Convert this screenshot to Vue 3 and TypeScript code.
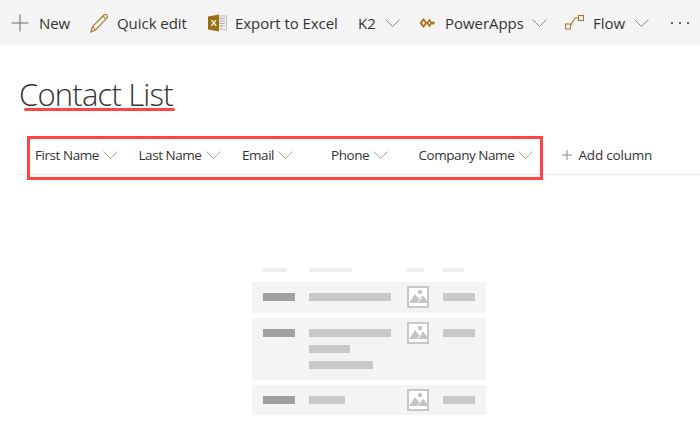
<script setup lang="ts">
interface Col { label: string; width: number }
const columns: Col[] = [
  { label: 'First Name', width: 103.5 },
  { label: 'Last Name', width: 103.5 },
  { label: 'Email', width: 89 },
  { label: 'Phone', width: 87.5 },
  { label: 'Company Name', width: 143 },
]
const rows = [
  { h: 'r1', bars: [82] },
  { h: 'r2', bars: [82, 41, 64] },
  { h: 'r3', bars: [36] },
]
</script>

<template>
  <div class="page">
    <div class="toolbar">
      <div class="cmd new">
        <svg width="18" height="18" viewBox="0 0 18 18"><path d="M9 .5v17M.5 9h17" stroke="#6b6b6b" stroke-width="1" fill="none"/></svg>
        <span>New</span>
      </div>
      <div class="cmd edit">
        <svg width="19" height="20" viewBox="0 0 19 20" fill="none" stroke="#a6772a" stroke-width="1.1"><path d="M1 19l1.500-5.500L14 2c1-1 2.300-1 3 0s.8 2 0 3L5.500 17z"/><path d="M2.500 13.500l3 3.500M13 3l3 3.300"/></svg>
        <span>Quick edit</span>
      </div>
      <div class="cmd excel">
        <svg width="19" height="18" viewBox="0 0 19 18"><rect x="9" y="2" width="9.500" height="13.500" fill="#f4f4f4" stroke="#b5b5b5" stroke-width=".8"/><path d="M10.500 4.500h6.500M10.500 7h6.500M10.500 9.500h6.500M10.500 12h6.500" stroke="#a9a9a9" stroke-width="1.200"/><path d="M13.500 2.500v12.500" stroke="#c9c9c9" stroke-width="1"/><path d="M0 2.500 11 .5v17L0 15.500z" fill="#9a6f12"/><text x="2.800" y="12.300" class="xl">X</text></svg>
        <span>Export to Excel</span>
      </div>
      <div class="cmd k2">
        <span>K2</span>
        <svg class="chev" width="15" height="8" viewBox="0 0 15 8"><path d="M.5.500 7.500 7.500 14.500.5" stroke="#8a8a8a" fill="none"/></svg>
      </div>
      <div class="cmd apps">
        <svg width="16" height="12" viewBox="0 0 16 12" fill="#a6771c"><path d="M4.500 1 8.500 6 4.500 11 .5 6zM4.500 4 3 6l1.500 2L6 6z" fill-rule="evenodd"/><path d="M10.500 1.500 13.500 6l-3 4.500L7.500 6zM10.500 4.500 9.500 6l1 1.500 1-1.500z" fill-rule="evenodd"/><path d="M14 4l2 2-2 2-1.500-2z"/></svg>
        <span>PowerApps</span>
        <svg class="chev" width="15" height="8" viewBox="0 0 15 8"><path d="M.5.500 7.500 7.500 14.500.5" stroke="#8a8a8a" fill="none"/></svg>
      </div>
      <div class="cmd flow">
        <svg width="19" height="15" viewBox="0 0 19 15" fill="none" stroke="#a6772a" stroke-width="1.100"><rect x=".5" y="9" width="5" height="5"/><rect x="13.500" y=".5" width="5" height="5"/><path d="M5.500 10.500 10 3h3.500"/></svg>
        <span>Flow</span>
        <svg class="chev" width="15" height="8" viewBox="0 0 15 8"><path d="M.5.500 7.500 7.500 14.500.5" stroke="#8a8a8a" fill="none"/></svg>
      </div>
      <div class="more"><i></i><i></i><i></i></div>
    </div>

    <div class="title-wrap">
      <h1 class="title">Contact List</h1>
      <div class="underline"></div>
    </div>

    <div class="head">
      <div class="cols">
        <div v-for="c in columns" :key="c.label" class="col" :style="{ width: c.width + 'px' }">
          <span>{{ c.label }}</span>
          <svg width="15" height="8" viewBox="0 0 15 8"><path d="M.5.500 7.500 7.500 14.500.5" stroke="#a6a6a6" fill="none"/></svg>
        </div>
      </div>
      <div class="add">
        <svg width="10" height="10" viewBox="0 0 10 10"><path d="M5 0v10M0 5h10" stroke="#8a8a8a" fill="none"/></svg>
        <span>Add column</span>
      </div>
      <div class="redbox"></div>
    </div>

    <div class="empty">
      <div class="ph-head">
        <b style="width: 24px"></b>
        <b style="width: 43px"></b>
        <b style="width: 17px"></b>
        <b style="width: 21px"></b>
      </div>
      <div v-for="r in rows" :key="r.h" class="ph-row" :class="r.h">
        <div class="c1"><b class="dark"></b></div>
        <div class="c2">
          <b v-for="(w, i) in r.bars" :key="i" :style="{ width: w + 'px' }"></b>
        </div>
        <div class="c3">
          <svg width="22" height="22" viewBox="0 0 22 22">
            <rect x="1" y="1" width="20" height="20" fill="#fff" stroke="#c8c8c8" stroke-width="2"/>
            <path d="M2 17 8 8l4.500 5.500L16 9.500l4 5V17z" fill="#c4c4c4"/>
            <circle cx="13" cy="6" r="2.200" fill="#c4c4c4"/>
            <path d="M10 17l4.500-5" stroke="#fff" stroke-width="1" fill="none"/>
          </svg>
        </div>
        <div class="c4"><b></b></div>
      </div>
    </div>
  </div>
</template>

<style>
html, body { margin: 0; background: #fff; }
</style>

<style scoped>
.page {
  width: 700px;
  height: 443px;
  overflow: hidden;
  font-family: "Open Sans", "Noto Sans", sans-serif;
  color: #333;
  font-size: 13.5px;
}
.toolbar {
  height: 45px;
  background: #f4f4f4;
  display: flex;
  align-items: center;
  padding-left: 11px;
  box-sizing: border-box;
  white-space: nowrap;
  font-size: 15px;
}
.cmd { display: flex; align-items: center; letter-spacing: -0.05px; flex: none; }
.new { width: 79px; gap: 10px; }
.edit { width: 118px; gap: 8px; }
.excel { width: 150px; gap: 8px; }
.k2 { width: 61px; gap: 9px; }
.apps { width: 146px; gap: 10px; }
.apps .chev { margin-left: -2px; }
.flow { width: 106px; gap: 9px; }
.xl { font: bold 9px "Liberation Sans", sans-serif; fill: #fff; }
.more { display: flex; gap: 6px; }
.more i { width: 2px; height: 2px; background: #666; display: block; }

.title-wrap { padding: 28px 0 0 19px; height: 91px; box-sizing: border-box; position: relative; }
.title {
  margin: 0;
  font-size: 31px;
  font-weight: 300;
  line-height: 42px;
  color: #333;
  letter-spacing: -0.8px;
}
.underline {
  position: absolute;
  left: 24px;
  top: 63px;
  width: 151px;
  height: 3px;
  background: #ff4444;
  border-radius: 2px;
}

.head {
  position: relative;
  margin-left: 19px;
  height: 39px;
  border-bottom: 1px solid #eaeaea;
  display: flex;
  align-items: center;
  box-sizing: border-box;
  padding-left: 16px;
}
.cols { display: flex; }
.col { display: flex; align-items: center; gap: 4px; white-space: nowrap; letter-spacing: -0.45px; }
.add { display: flex; align-items: center; gap: 7px; white-space: nowrap; letter-spacing: -0.2px; }
.redbox {
  position: absolute;
  left: 8px;
  top: 0;
  width: 516px;
  height: 44px;
  box-sizing: border-box;
  border: 3px solid #ff4444;
}

.empty { margin: 93px 0 0 252px; width: 234px; }
.ph-head {
  display: grid;
  grid-template-columns: 46px 98px 36px 32px;
  padding-left: 11px;
  height: 14px;
  align-items: start;
}
.ph-head b { display: block; height: 4px; background: #eeeeee; }
.ph-row {
  display: grid;
  grid-template-columns: 46px 98px 36px 32px;
  padding-left: 11px;
  background: #f4f4f4;
  box-sizing: border-box;
  margin-bottom: 5px;
}
.r1 { height: 31px; padding-top: 11px; }
.r2 { height: 62px; padding-top: 11px; }
.r3 { height: 30px; padding-top: 11px; }
.ph-row b { display: block; height: 8px; background: #c8c8c8; }
.ph-row b.dark { width: 32px; background: #a0a0a0; }
.c2 { display: flex; flex-direction: column; gap: 8px; }
.c3 { margin-top: -7px; height: 22px; }
.c3 svg { display: block; }
.c4 b { width: 32px; }
</style>
